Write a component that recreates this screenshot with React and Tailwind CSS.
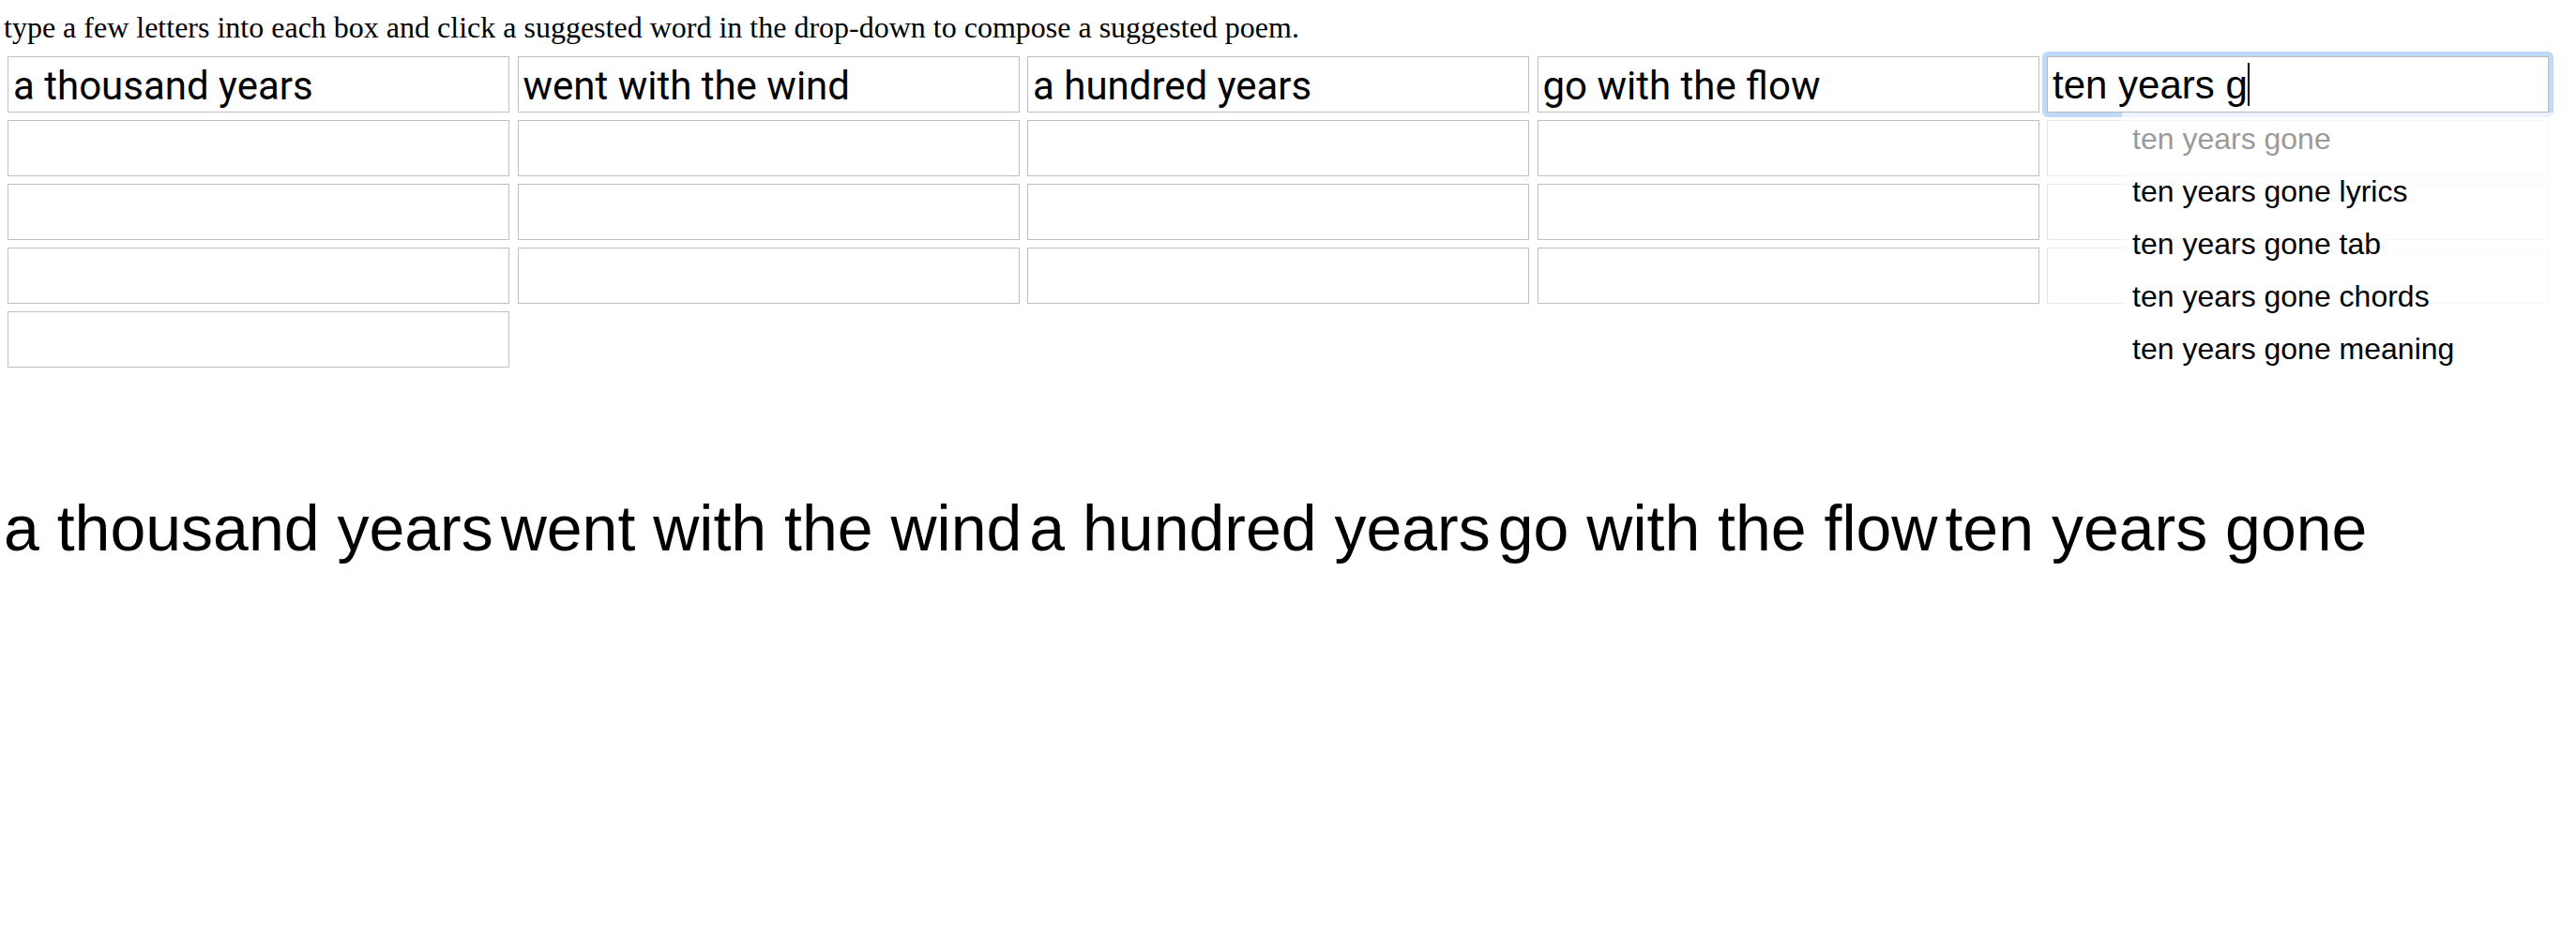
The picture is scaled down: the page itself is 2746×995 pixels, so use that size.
import React from "react";

const filled = ["a thousand years", "went with the wind", "a hundred years", "go with the flow"];
const suggestions = [
  { text: "ten years gone", muted: true },
  { text: "ten years gone lyrics" },
  { text: "ten years gone tab" },
  { text: "ten years gone chords" },
  { text: "ten years gone meaning" },
];
const poem = ["a thousand years", "went with the wind", "a hundred years", "go with the flow", "ten years gone"];

function Box({ value = "", faint = false }) {
  return (
    <input
      readOnly
      value={value}
      className={
        "block h-[60px] w-full border bg-white px-[5px] pt-[3px] font-['Roboto',sans-serif] text-[42px] text-black outline-none " +
        (faint ? "border-[#e8e8e8]" : "border-[#bfbfbf]")
      }
    />
  );
}

function FocusedBox() {
  return (
    <div className="relative">
      <div className="pointer-events-none absolute -inset-[5px] rounded-[6px] border-[5px] border-[#bddafb]" />
      <div className="flex h-[60px] items-center border border-[#bababa] bg-white pl-[5px] font-['Liberation_Sans',Arial,sans-serif] text-[42px] text-black">
        <span className="whitespace-pre">ten years g</span>
        <span className="inline-block h-[46px] w-[2px] bg-black" />
      </div>
      <ul className="absolute left-[80px] top-[60px] z-10 w-[470px] bg-white/70 pb-[12px] pl-[11px] font-['Liberation_Sans',Arial,sans-serif] text-[32px] leading-[56px]">
        {suggestions.map((s) => (
          <li key={s.text} className={s.muted ? "text-[#9a9a9a]" : "text-black"}>
            {s.text}
          </li>
        ))}
      </ul>
    </div>
  );
}

export default function App() {
  return (
    <div className="min-h-screen bg-white text-black">
      <p className="pl-[4px] pt-[11px] font-['Liberation_Serif','Times_New_Roman',serif] text-[32px] leading-[36px]">
        type a few letters into each box and click a suggested word in the drop-down to compose a suggested poem.
      </p>
      <div className="ml-[8px] mt-[13px] grid grid-cols-[repeat(5,535px)] gap-x-[8.5px] gap-y-[8px]">
        {filled.map((v) => (
          <Box key={v} value={v} />
        ))}
        <FocusedBox />
        {[0, 1, 2].map((r) => (
          <React.Fragment key={r}>
            <Box />
            <Box />
            <Box />
            <Box />
            <Box faint />
          </React.Fragment>
        ))}
        <Box />
      </div>
      <div className="mt-[132px] flex gap-x-[8px] whitespace-nowrap pl-[4px] font-['Liberation_Sans',Arial,sans-serif] text-[68px] leading-[78px]">
        {poem.map((p) => (
          <span key={p}>{p}</span>
        ))}
      </div>
    </div>
  );
}
